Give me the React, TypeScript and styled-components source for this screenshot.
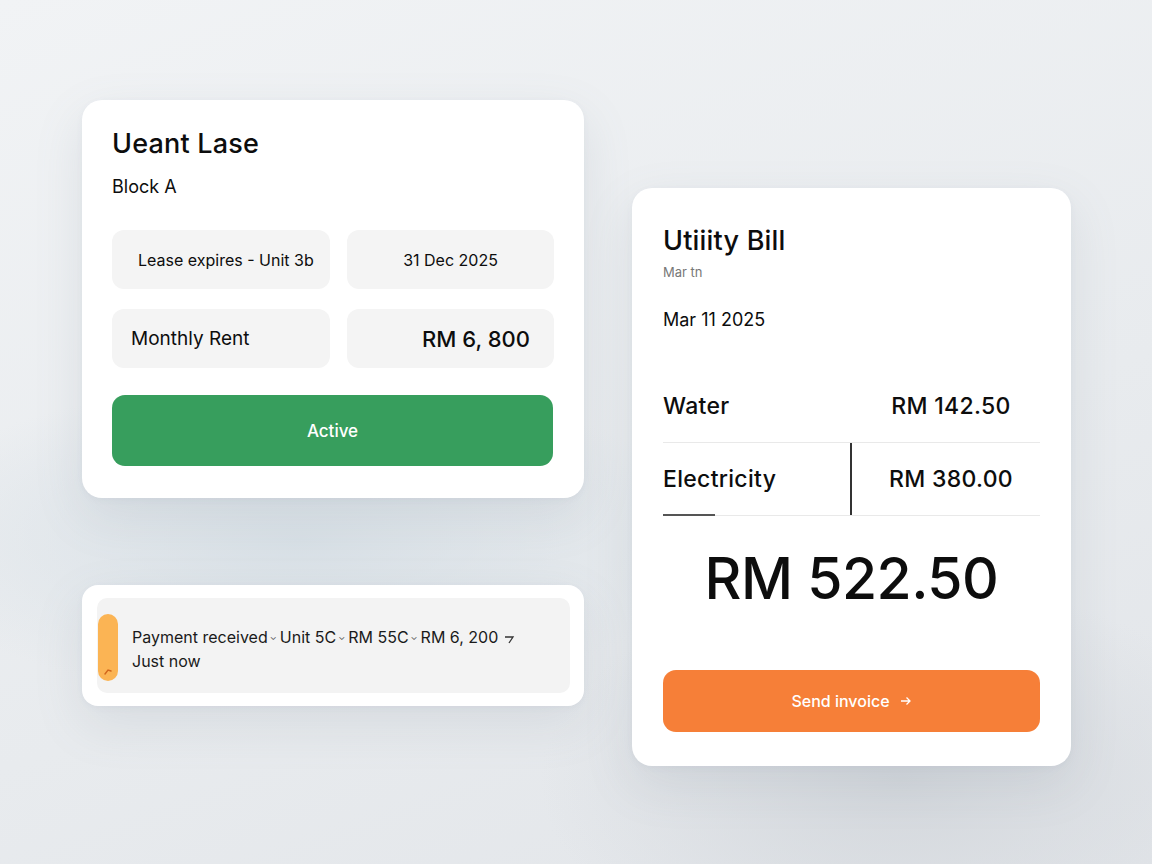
import styled, { createGlobalStyle } from "styled-components";

const Global = createGlobalStyle`
  html, body {
    margin: 0;
    padding: 0;
  }
  body {
    font-family: Inter, "Noto Sans", "Liberation Sans", sans-serif;
    color: #0d0d0d;
    background: #eceff1;
  }
`;

const Page = styled.div`
  width: 1152px;
  height: 864px;
  box-sizing: border-box;
  padding: 100px 0 0 82px;
  display: flex;
  align-items: flex-start;
  gap: 48px;
  background: radial-gradient(ellipse 420px 160px at 300px 540px, #d8e0e6 0%, rgba(216,224,230,0) 100%),
    radial-gradient(ellipse 360px 200px at 900px 780px, #d3d7dc 0%, rgba(211,215,220,0) 100%),
    linear-gradient(160deg, #f1f3f5 0%, #e8ebee 60%, #e2e5e9 100%);
  overflow: hidden;
`;

const Column = styled.div<{ $top?: number }>`
  display: flex;
  flex-direction: column;
  gap: 87px;
  margin-top: ${(p) => p.$top || 0}px;
`;

const Card = styled.div<{ $w: number }>`
  width: ${(p) => p.$w}px;
  box-sizing: border-box;
  background: #fff;
  border-radius: 20px;
  box-shadow: 0 18px 50px rgba(110, 125, 145, 0.14), 0 2px 6px rgba(110, 125, 145, 0.06);
`;

const LeaseCard = styled(Card)`
  padding: 28px 31px 32px 30px;
`;

const Title = styled.h2`
  margin: 0;
  font-size: 27px;
  line-height: 32px;
  font-weight: 500;
  letter-spacing: 0.2px;
`;

const Sub = styled.div`
  margin-top: 15px;
  font-size: 18px;
  line-height: 24px;
`;

const TileGrid = styled.div`
  margin-top: 31px;
  display: grid;
  grid-template-columns: 218px 207px;
  column-gap: 17px;
  row-gap: 20px;
`;

const Tile = styled.div<{ $align: "left" | "center" | "right"; $size: number; $pad: number; $weight?: number }>`
  height: 59px;
  border-radius: 12px;
  background: #f4f4f4;
  display: flex;
  align-items: center;
  justify-content: ${(p) => (p.$align === "left" ? "flex-start" : p.$align === "right" ? "flex-end" : "center")};
  padding: 0 ${(p) => p.$pad}px;
  font-size: ${(p) => p.$size}px;
  font-weight: ${(p) => p.$weight || 400};
  white-space: nowrap;
`;

const Button = styled.div<{ $bg: string; $h: number; $size: number }>`
  height: ${(p) => p.$h}px;
  border-radius: 13px;
  background: ${(p) => p.$bg};
  color: #fff;
  display: flex;
  align-items: center;
  justify-content: center;
  gap: 10px;
  font-size: ${(p) => p.$size}px;
  font-weight: 500;
`;

const NoticeCard = styled(Card)`
  padding: 13px 14px 13px 15px;
  border-radius: 16px;
`;

const NoticeBox = styled.div`
  height: 95px;
  box-sizing: border-box;
  padding: 4px 0 0 1px;
  border-radius: 10px;
  background: #f3f3f3;
  display: flex;
  align-items: center;
  gap: 14px;
`;

const Pill = styled.div`
  width: 20px;
  height: 67px;
  border-radius: 10px;
  background: #fbb454;
  display: flex;
  align-items: flex-end;
  justify-content: center;
  padding-bottom: 6px;
  box-sizing: border-box;
`;

const NoticeText = styled.div`
  font-size: 16px;
  line-height: 24px;
  color: #1a1a1a;
  margin-top: 2px;
`;

const Sep = styled.span`
  display: inline-block;
  font-size: 9px;
  color: #555;
  margin: 0 3px 0 2px;
  vertical-align: 3px;
`;

const BillCard = styled(Card)`
  padding: 37px 31px 34px 31px;
`;

const Tiny = styled.div`
  margin-top: 7px;
  font-size: 13px;
  line-height: 16px;
  color: #777;
`;

const DateLine = styled.div`
  margin-top: 28px;
  font-size: 18px;
  line-height: 24px;
`;

const Rows = styled.div`
  margin-top: 38px;
`;

const Row = styled.div`
  display: grid;
  grid-template-columns: 187px 1fr;
  height: 72px;
  border-bottom: 1px solid #e9e9e9;
  position: relative;
`;

const Cell = styled.div<{ $center?: boolean; $split?: boolean }>`
  display: flex;
  align-items: center;
  justify-content: ${(p) => (p.$center ? "center" : "flex-start")};
  font-size: 23px;
  font-weight: 500;
  letter-spacing: 0.3px;
  padding-left: ${(p) => (p.$center ? "10px" : "0")};
  border-left: 2px solid ${(p) => (p.$split ? "#333" : "transparent")};
  &:first-child {
    border-left: none;
  }
`;

const Accent = styled.span`
  position: absolute;
  left: 0;
  bottom: -1px;
  width: 52px;
  height: 2px;
  background: #555;
`;

const Total = styled.div`
  margin-top: 31px;
  text-align: center;
  font-size: 57px;
  line-height: 64px;
  font-weight: 500;
  letter-spacing: -0.5px;
`;

export default function App() {
  return (
    <Page>
      <Global />
      <Column>
        <LeaseCard $w={502}>
          <Title>Ueant Lase</Title>
          <Sub>Block A</Sub>
          <TileGrid>
            <Tile $align="left" $size={16} $pad={26}>Lease expires - Unit 3b</Tile>
            <Tile $align="center" $size={16} $pad={0}>31 Dec 2025</Tile>
            <Tile $align="left" $size={19} $pad={19}>Monthly Rent</Tile>
            <Tile $align="right" $size={22} $pad={24} $weight={500}>RM 6, 800</Tile>
          </TileGrid>
          <div style={{ marginTop: 27 }}>
            <Button $bg="#379e5d" $h={71} $size={17}>Active</Button>
          </div>
        </LeaseCard>
        <NoticeCard $w={502}>
          <NoticeBox>
            <Pill>
              <svg width="8" height="7" viewBox="0 0 8 7">
                <path d="M1 6 L4 2 L7 3" stroke="#d2661c" strokeWidth="1.4" fill="none" strokeLinecap="round" />
              </svg>
            </Pill>
            <NoticeText>
              Payment received<Sep>⌄</Sep>Unit 5C<Sep>⌄</Sep>RM 55C<Sep>⌄</Sep>RM 6, 200{" "}
              <svg width="12" height="10" viewBox="0 0 12 10" style={{ verticalAlign: -1 }}>
                <path d="M2 3 H10 L6 9" stroke="#333" strokeWidth="1.3" fill="none" />
              </svg>
              <br />
              Just now
            </NoticeText>
          </NoticeBox>
        </NoticeCard>
      </Column>
      <Column $top={88}>
        <BillCard $w={439}>
          <Title>Utiiity Bill</Title>
          <Tiny>Mar tn</Tiny>
          <DateLine>Mar 11 2025</DateLine>
          <Rows>
            <Row>
              <Cell>Water</Cell>
              <Cell $center>RM 142.50</Cell>
            </Row>
            <Row>
              <Cell>Electricity</Cell>
              <Cell $center $split>RM 380.00</Cell>
              <Accent />
            </Row>
          </Rows>
          <Total>RM 522.50</Total>
          <div style={{ marginTop: 59 }}>
            <Button $bg="#f67f38" $h={62} $size={16}>
              Send invoice
              <svg width="12" height="10" viewBox="0 0 12 10">
                <path d="M1 5 H10 M6.5 1.5 L10 5 L6.5 8.5" stroke="#fff" strokeWidth="1.3" fill="none" />
              </svg>
            </Button>
          </div>
        </BillCard>
      </Column>
    </Page>
  );
}
